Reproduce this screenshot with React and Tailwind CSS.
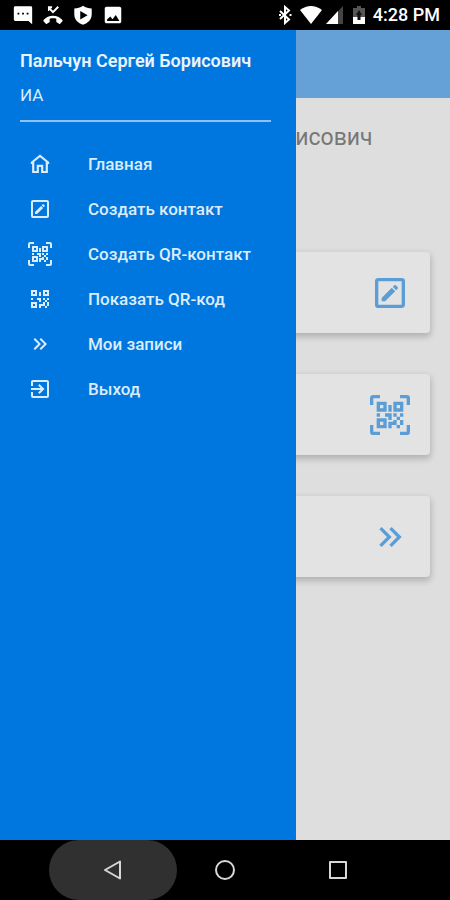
import React, { useState } from 'react';

const icons = {
  home: 'M12 2.6L2.8 9.9V11.9H4.1V21H10.9V15H13.1V21H19.9V11.9H21.2V9.9L12 2.6M12 5.200L17.700 9.800V18.900H15.300V12.800H8.700V18.900H6.300V9.800L12 5.200Z',
  edit: 'M19,19V5H5V19H19M19,3A2,2 0 0,1 21,5V19C21,20.11 20.1,21 19,21H5A2,2 0 0,1 3,19V5A2,2 0 0,1 5,3H19M16.7,9.35L15.7,10.35L13.65,8.3L14.65,7.3C14.86,7.08 15.21,7.08 15.42,7.3L16.7,8.58C16.92,8.79 16.92,9.14 16.7,9.35M7,14.94L13.06,8.88L15.12,10.94L9.06,17H7V14.94Z',
  scan: 'M4,4H10V10H4V4M20,4V10H14V4H20M14,15H16V13H14V11H16V13H18V11H20V13H18V15H20V18H18V20H16V18H13V20H11V16H14V15M16,15V18H18V15H16M4,20V14H10V20H4M6,6V8H8V6H6M16,6V8H18V6H16M6,16V18H8V16H6M4,11H6V13H4V11M9,11H13V15H11V13H9V11M11,6H13V10H11V6M2,2V6H0V2A2,2 0 0,1 2,0H6V2H2M22,0A2,2 0 0,1 24,2V6H22V2H18V0H22M2,18V22H6V24H2A2,2 0 0,1 0,22V18H2M22,22V18H24V22A2,2 0 0,1 22,24H18V22H22Z',
  qr: 'M3,11H5V13H3V11M11,5H13V9H11V5M9,11H13V15H11V13H9V11M15,11H17V13H19V11H21V13H19V15H21V19H19V21H17V19H13V21H11V17H15V15H17V13H15V11M19,19V15H17V19H19M15,3H21V9H15V3M17,5V7H19V5H17M3,3H9V9H3V3M5,5V7H7V5H5M3,15H9V21H3V15M5,17V19H7V17H5Z',
  records: 'M5.59,7.41L7,6L13,12L7,18L5.59,16.59L10.17,12L5.59,7.41M11.59,7.41L13,6L19,12L13,18L11.59,16.59L16.17,12L11.59,7.41Z',
  exit: 'M19,3H5C3.89,3 3,3.89 3,5V9H5V5H19V19H5V15H3V19A2,2 0 0,0 5,21H19A2,2 0 0,0 21,19V5C21,3.89 20.1,3 19,3M10.08,15.58L11.5,17L16.5,12L11.5,7L10.08,8.41L12.67,11H3V13H12.67L10.08,15.58Z',
  message: 'M3.5 2.5H20.5A1.5 1.5 0 0 1 22 4V22L18 18.500H3.500A1.500 1.500 0 0 1 2 17V4A1.500 1.500 0 0 1 3.500 2.500M6 9.500V11.500H8V9.500H6M11 9.500V11.500H13V9.500H11M16 9.500V11.500H18V9.500H16Z',
  missed: 'M6.500 2.500H11V4.600H9.300L12 7.300L17 2.300L18.500 3.800L12 10.300L7.900 6.200V7.500H6.500V2.500M22.300 17.500C19.500 14.200 16 12.700 12 12.700S4.500 14.200 1.700 17.500C1.400 17.900 1.400 18.400 1.700 18.800L4.200 21.500C4.500 21.800 5 21.900 5.400 21.600L8 19.800C8.300 19.600 8.400 19.300 8.400 19V16.200C10.800 15.500 13.200 15.500 15.600 16.200V19C15.600 19.300 15.700 19.600 16 19.800L18.600 21.600C19 21.900 19.500 21.800 19.800 21.500L22.300 18.800C22.600 18.400 22.600 17.900 22.300 17.500Z',
  shield: 'M12 2C15 4 18 5 21.500 5V11.500C21.500 17 17.500 21 12 22.500C6.500 21 2.500 17 2.500 11.500V5C6 5 9 4 12 2M9 7.500V17L17 12.200L9 7.500Z',
  image: 'M21,19V5C21,3.9 20.1,3 19,3H5C3.9,3 3,3.9 3,5V19C3,20.1 3.9,21 5,21H19C20.1,21 21,20.1 21,19M9,13.500L11.500,16.500L15,12L19,18.500H5.500V17L9,13.500Z',
};

const menuItems = [
  { icon: 'home', label: 'Главная' },
  { icon: 'edit', label: 'Создать контакт' },
  { icon: 'scan', label: 'Создать QR-контакт' },
  { icon: 'qr', label: 'Показать QR-код' },
  { icon: 'records', label: 'Мои записи' },
  { icon: 'exit', label: 'Выход' },
];

const cards = [
  { icon: 'edit', label: 'Создать контакт' },
  { icon: 'scan', label: 'Создать QR-контакт' },
  { icon: 'records', label: 'Мои записи' },
];

const Icon = ({ name, className }) => (
  <svg viewBox="0 0 24 24" fill="currentColor" fillRule="evenodd" className={className} aria-hidden="true">
    <path d={icons[name]} />
  </svg>
);

const StatusBar = () => (
  <div className="flex h-[30px] items-center justify-between bg-black pr-2.5 pl-3 text-white">
    <div className="flex items-center gap-2">
      <Icon name="message" className="size-[22px]" />
      <Icon name="missed" className="size-[22px]" />
      <Icon name="shield" className="size-[22px]" />
      <Icon name="image" className="size-[22px]" />
    </div>
    <div className="flex items-center">
      {/* Bluetooth */}
      <svg viewBox="0 0 14 20" className="mr-2 h-5 w-3.5" fill="none" stroke="currentColor" strokeWidth="2">
        <path d="M2 6L11 14.500L7 18V2L11 5.500L2 14" />
        <path d="M1 10H3M11.500 10H13.500" />
      </svg>
      {/* Wi-Fi and cell signal */}
      <svg viewBox="0 0 22 18" className="mr-1 h-[18px] w-[22px]" fill="currentColor">
        <path d="M0 4Q11 -4 22 4L11 18Z" />
      </svg>
      <svg viewBox="0 0 17 18" className="mr-2.5 h-[18px] w-[17px]" fill="currentColor">
        <path d="M17 0V18H0Z" fill="#444" />
        <path d="M12 5V18H0Z" />
      </svg>
      {/* Battery */}
      <svg viewBox="0 0 12 18" className="mr-2 h-[18px] w-3" fill="currentColor">
        <path d="M4 0H8V2H12V18H0V2H4Z" fill="#555" />
        <path d="M0 11H12V18H0Z" />
        <path d="M6 4L9 9H7.500V14H4.500V9H3Z" fill="#111" />
      </svg>
      <span className="text-[18px] leading-5 font-medium">4:28 PM</span>
    </div>
  </div>
);

const Drawer = ({ onSelect }) => (
  <aside className="absolute inset-y-0 left-0 w-[296px] bg-[#0077df] text-[#dcecfb]">
    <div className="mr-[25px] ml-5 border-b-2 border-[#8fc2f0] pt-5 pb-3.5">
      <p className="text-[18px] leading-[22px] font-semibold whitespace-nowrap text-[#eaf4fd]">Пальчун Сергей Борисович</p>
      <p className="mt-3 text-[17px] leading-[22px]">ИА</p>
    </div>
    <nav className="mt-[19px]">
      {menuItems.map((item) => (
        <button
          key={item.label}
          className="flex h-[45px] w-full items-center gap-9 pl-7 text-left text-[17px] leading-[22px] font-medium"
          onClick={() => onSelect(item.label)}
        >
          <Icon name={item.icon} className="size-6" />
          <span>{item.label}</span>
        </button>
      ))}
    </nav>
  </aside>
);

const NavigationBar = () => (
  <div className="grid h-[60px] grid-cols-3 place-items-center bg-black px-[12.5%] text-[#d8d8d8]">
    <button aria-label="Назад" className="flex h-[60px] w-32 items-center justify-center rounded-full bg-[#303030]">
      <svg viewBox="0 0 20 20" className="size-5" fill="none" stroke="currentColor" strokeWidth="2" strokeLinejoin="round">
        <path d="M17 1.500V18.500L2 10Z" />
      </svg>
    </button>
    <button aria-label="Домой">
      <svg viewBox="0 0 20 20" className="size-5" fill="none" stroke="currentColor" strokeWidth="2">
        <circle cx="10" cy="10" r="9" />
      </svg>
    </button>
    <button aria-label="Недавние">
      <svg viewBox="0 0 20 20" className="size-5" fill="none" stroke="currentColor" strokeWidth="2" strokeLinejoin="round">
        <path d="M2 2H18V18H2Z" />
      </svg>
    </button>
  </div>
);

const App = () => {
  const [, setPage] = useState('Главная');

  return (
    <div className="flex min-h-screen flex-col bg-[#dededf] font-[Roboto,sans-serif]">
      <StatusBar />
      <div className="relative flex-1">
        <header className="h-[68px] bg-[#65a1d6]" />
        <main>
          <h1 className="pt-6 text-center text-[23px] leading-8 text-[#777777]">Пальчун Сергей Борисович</h1>
          <div className="mx-5 mt-[98px] flex flex-col gap-[41px]">
            {cards.map((card) => (
              <button
                key={card.label}
                aria-label={card.label}
                className="flex h-[81px] items-center justify-end rounded-sm bg-[#e3e3e3] pr-5 text-[#5b9dd6] shadow-[0_3px_6px_1px_rgba(0,0,0,0.2)]"
                onClick={() => setPage(card.label)}
              >
                <Icon name={card.icon} className="size-10" />
              </button>
            ))}
          </div>
        </main>
        <Drawer onSelect={setPage} />
      </div>
      <NavigationBar />
    </div>
  );
};

export default App;
